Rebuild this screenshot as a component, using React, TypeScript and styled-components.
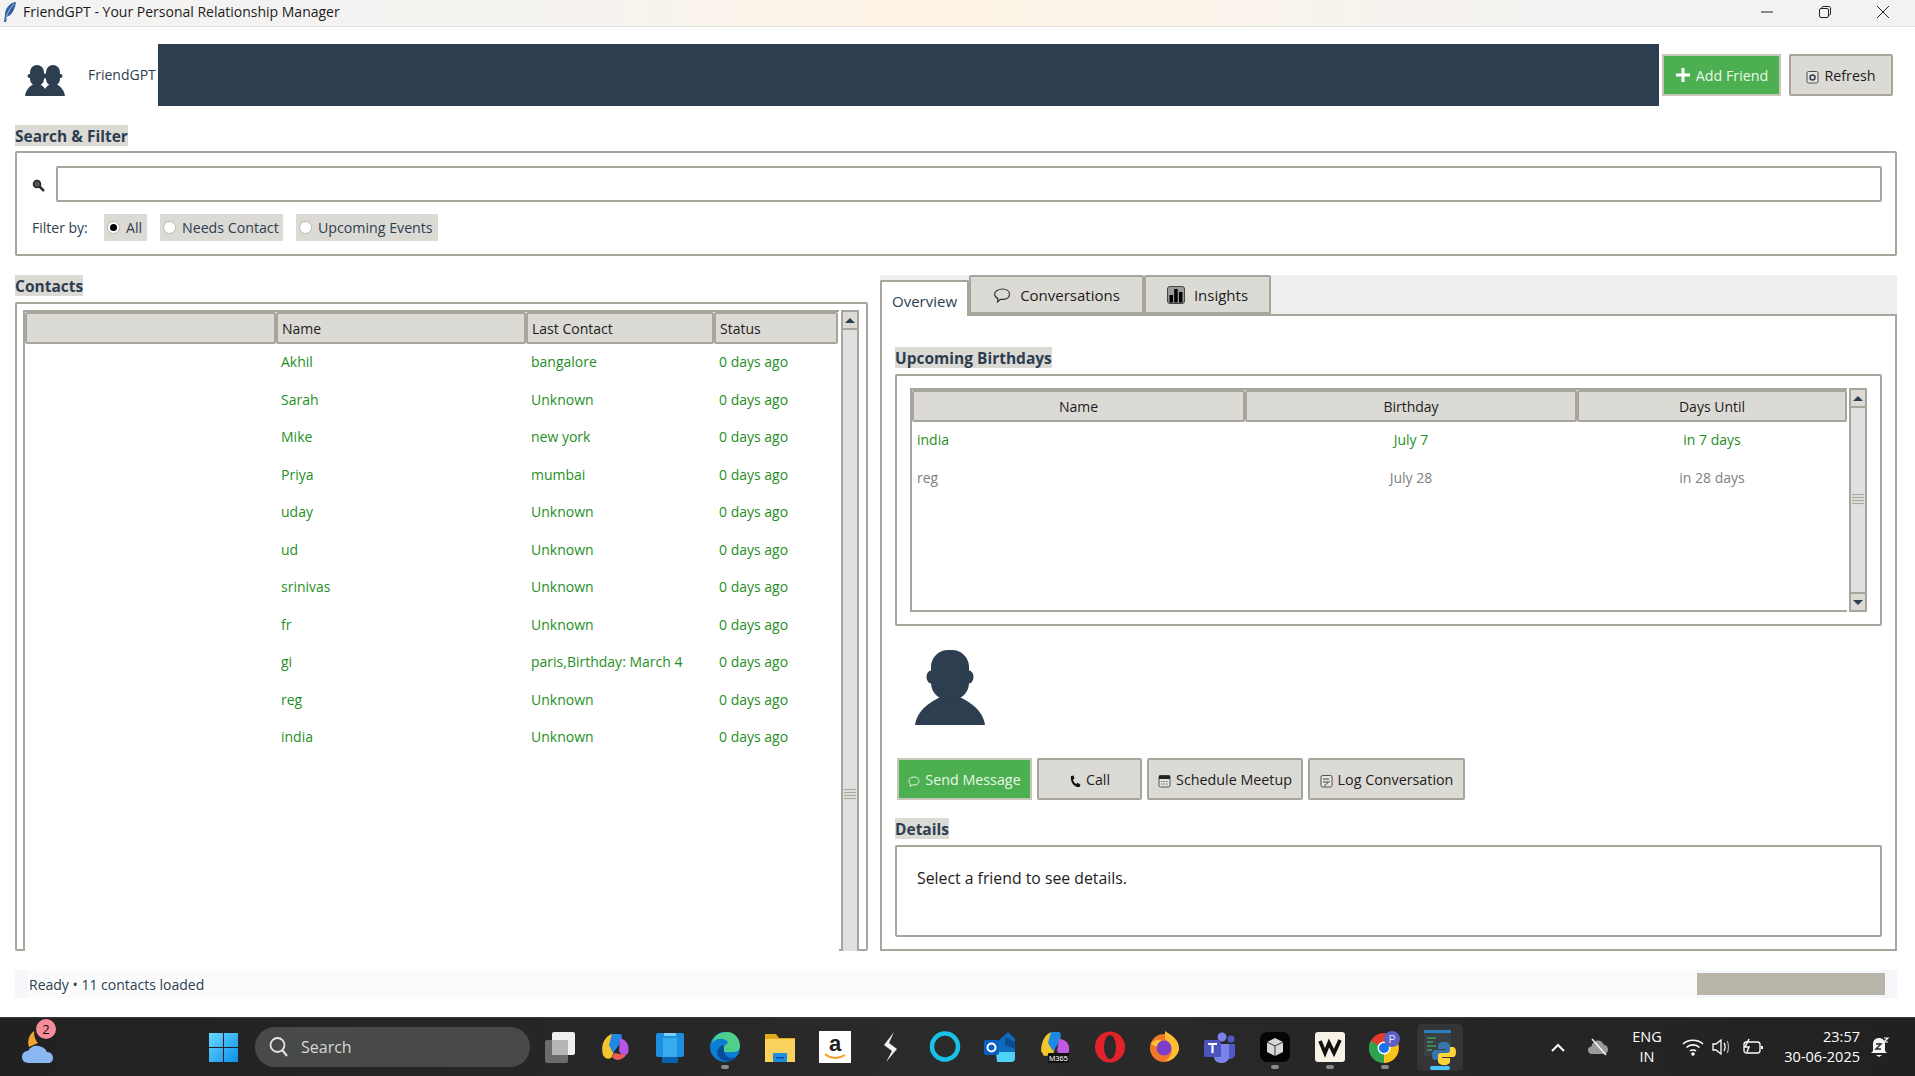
import React from 'react'
import styled, {createGlobalStyle} from 'styled-components'

const NAVY = '#2c3e50'
const CLAM = '#dcdad5'
const EDGE = '#a8a59c'

const GlobalStyle = createGlobalStyle`
  html, body {
    margin: 0;
    padding: 0;
    background: #fff;
  }
  body {
    font-family: "Open Sans", "Noto Sans", "Liberation Sans", sans-serif;
    font-size: 14px;
    color: #1c1c1c;
  }
`

const Page = styled.div`
  width: 1915px;
  height: 1076px;
  display: flex;
  flex-direction: column;
  overflow: hidden;
  background: #fff;
`

const TitleBar = styled.header`
  flex: none;
  display: flex;
  align-items: center;
  padding: 0 3px 3px 3px;
  border-bottom: 1px solid #e2e2e2;
  height: 23px;
  background: linear-gradient(90deg, #f3f3f3 0%, #f5f3f0 28%, #fdf3e5 48%, #f8f3ec 68%, #f2f2f2 84%);
  font-size: 14px;
`

const TitleText = styled.span`
  margin-left: 6px;
  flex: 1;
`

const WindowButton = styled.span`
  width: 58px;
  height: 23px;
  display: flex;
  align-items: center;
  justify-content: center;
`

const AppBody = styled.main`
  flex: 1;
  min-height: 0;
  display: flex;
  flex-direction: column;
  padding: 17px 18px 0 15px;
`

const HeaderRow = styled.div`
  height: 62px;
  display: flex;
  align-items: center;
`

const LogoBox = styled.span`
  width: 73px;
  padding: 12px 0 0 10px;
  box-sizing: border-box;
  display: flex;
`

const AppName = styled.span`
  width: 70px;
  margin-top: -2px;
  color: ${NAVY};
  font-size: 14px;
  white-space: nowrap;
`

const HeaderBar = styled.div`
  flex: none;
  width: 1501px;
  height: 62px;
  background: ${NAVY};
`

const HeaderActions = styled.div`
  display: flex;
  gap: 8px;
  margin-left: 3px;
`

const Button = styled.button<{$primary?: boolean; $w: number; $h?: number}>`
  width: ${p => p.$w}px;
  height: ${p => p.$h ?? 42}px;
  flex: none;
  display: flex;
  align-items: center;
  justify-content: center;
  gap: 5px;
  padding: 0;
  font: inherit;
  font-size: 14.3px;
  color: ${p => (p.$primary ? '#e9f7e9' : '#1c1c1c')};
  background: ${p => (p.$primary ? '#4caf50' : CLAM)};
  border: 2px solid ${p => (p.$primary ? '#c6c7b8' : EDGE)};
  border-radius: ${p => (p.$primary ? 0 : 2)}px;
`

const SectionLabel = styled.div<{$top?: number; $gap?: number}>`
  align-self: flex-start;
  height: 21px;
  line-height: 22px;
  margin-top: ${p => p.$top ?? 0}px;
  margin-bottom: ${p => p.$gap ?? 6}px;
  background: ${CLAM};
  color: ${NAVY};
  font-weight: 700;
  font-size: 15.5px;
  white-space: nowrap;
`

const SearchFrame = styled.section`
  height: 105px;
  box-sizing: border-box;
  display: flex;
  flex-direction: column;
  padding: 13px 13px 0 15px;
  border: 2px solid ${EDGE};
  border-radius: 2px;
`

const SearchRow = styled.div`
  display: flex;
  align-items: center;
  gap: 11px;
`

const SearchInput = styled.div`
  flex: 1;
  height: 36px;
  box-sizing: border-box;
  border: 2px solid ${EDGE};
  border-radius: 2px;
  background: #fff;
`

const FilterRow = styled.div`
  display: flex;
  align-items: center;
  margin-top: 12px;
  color: #44525f;
`

const FilterCaption = styled.span`
  width: 72px;
  color: ${NAVY};
`

const RadioChip = styled.label<{$w: number; $gap: number}>`
  width: ${p => p.$w}px;
  margin-right: ${p => p.$gap}px;
  height: 27px;
  display: flex;
  align-items: center;
  gap: 6px;
  padding-left: 3px;
  box-sizing: border-box;
  background: ${CLAM};
  color: ${NAVY};
  font-size: 14.2px;
  white-space: nowrap;
`

const RadioDot = styled.span<{$on?: boolean}>`
  width: 13px;
  height: 13px;
  flex: none;
  box-sizing: border-box;
  border: 1px solid #bcb9b0;
  border-radius: 50%;
  background: #fff;
  display: flex;
  align-items: center;
  justify-content: center;

  &::after {
    content: '';
    width: 7px;
    height: 7px;
    border-radius: 50%;
    background: ${p => (p.$on ? '#000' : 'transparent')};
  }
`

const Columns = styled.div`
  height: 676px;
  margin-top: 19px;
  display: grid;
  grid-template-columns: 853px 1017px;
  gap: 12px;
`

const ContactsColumn = styled.section`
  min-height: 0;
  display: flex;
  flex-direction: column;
`

const GroupFrame = styled.div<{$h?: number}>`
  ${p => (p.$h ? `height: ${p.$h}px;` : 'flex: 1;')}
  min-height: 0;
  box-sizing: border-box;
  border: 2px solid ${EDGE};
  border-radius: 2px;
  background: #fff;
`

const ContactsFrame = styled(GroupFrame)`
  padding: 6px 7px 0 6px;
  display: flex;

  & > * {
    margin-bottom: -2px;
    position: relative;
  }
`

const TreeBody = styled.div<{$closed?: boolean}>`
  flex: 1;
  min-width: 0;
  background: #fff;
  border: solid ${EDGE};
  border-width: 2px 0 ${p => (p.$closed ? 2 : 0)}px 2px;
  display: flex;
  flex-direction: column;
`

const TreeHead = styled.div<{$cols: string}>`
  height: 32px;
  flex: none;
  display: grid;
  grid-template-columns: ${p => p.$cols};
`

const HeadCell = styled.div<{$center?: boolean}>`
  display: flex;
  align-items: center;
  justify-content: ${p => (p.$center ? 'center' : 'flex-start')};
  padding-left: ${p => (p.$center ? 0 : 4)}px;
  background: ${CLAM};
  border: 2px solid ${EDGE};
  border-radius: 2px;
  font-size: 14px;
  color: #1c1c1c;
`

const TreeRow = styled.div<{$cols: string; $muted?: boolean}>`
  height: 37.5px;
  box-sizing: border-box;
  padding-bottom: 2px;
  display: grid;
  grid-template-columns: ${p => p.$cols};
  align-items: center;
  font-size: 14px;
  color: ${p => (p.$muted ? '#808080' : '#1f8f1f')};
`

const TreeCell = styled.span<{$center?: boolean}>`
  padding-left: ${p => (p.$center ? 0 : 5)}px;
  text-align: ${p => (p.$center ? 'center' : 'left')};
  white-space: nowrap;
`

const Scrollbar = styled.div<{$open?: boolean}>`
  width: 18px;
  flex: none;
  margin-left: 2px;
  display: flex;
  flex-direction: column;
  box-sizing: border-box;
  border: solid ${EDGE};
  border-width: 2px 2px ${p => (p.$open ? 0 : 2)}px 2px;
  background: #e0e0e0;
`

const ScrollArrow = styled.div<{$down?: boolean}>`
  height: 16px;
  flex: none;
  display: flex;
  align-items: center;
  justify-content: center;
  background: ${CLAM};
  border-${p => (p.$down ? 'top' : 'bottom')}: 2px solid ${EDGE};

  &::after {
    content: '';
    border: 5px solid transparent;
    border-top-width: ${p => (p.$down ? 5 : 0)}px;
    border-bottom-width: ${p => (p.$down ? 0 : 5)}px;
    border-top-color: ${p => (p.$down ? NAVY : 'transparent')};
    border-bottom-color: ${p => (p.$down ? 'transparent' : NAVY)};
  }
`

const ScrollTrack = styled.div<{$gripAt?: number}>`
  flex: 1;
  display: flex;
  align-items: ${p => (p.$gripAt ? 'flex-start' : 'center')};
  justify-content: center;
  padding-top: ${p => p.$gripAt ?? 0}px;
`

const Grip = styled.div`
  width: 12px;
  height: 12px;
  background: repeating-linear-gradient(180deg, #a9a69e 0 1px, #dedcd8 1px 3px);
`

const Notebook = styled.section`
  min-height: 0;
  display: flex;
  flex-direction: column;
`

const TabStrip = styled.div`
  height: 39px;
  flex: none;
  display: flex;
  align-items: flex-end;
  background: #eeeeee;
`

const Tab = styled.div<{$active?: boolean; $w: number}>`
  width: ${p => p.$w}px;
  height: ${p => (p.$active ? 36 : 39)}px;
  box-sizing: border-box;
  display: flex;
  align-items: center;
  justify-content: center;
  gap: 9px;
  padding-top: ${p => (p.$active ? 3 : 1)}px;
  margin-bottom: ${p => (p.$active ? -2 : 0)}px;
  position: relative;
  font-size: 15px;
  color: ${p => (p.$active ? NAVY : '#1c1c1c')};
  background: ${p => (p.$active ? '#fff' : CLAM)};
  border: 2px solid ${EDGE};
  border-bottom: ${p => (p.$active ? 'none' : `2px solid ${EDGE}`)};
  border-radius: 2px 2px 0 0;
`

const TabPane = styled.div`
  flex: 1;
  min-height: 0;
  display: flex;
  flex-direction: column;
  padding: 31px 13px 0 13px;
  box-sizing: border-box;
  border: 2px solid ${EDGE};
  background: #fff;
`

const BirthdaysFrame = styled(GroupFrame)`
  padding: 12px 13px 12px 13px;
  display: flex;
  flex: none;
`

const AvatarBox = styled.div`
  height: 75px;
  margin: 24px 0 33px 20px;
  display: flex;
`

const ActionRow = styled.div`
  display: flex;
  gap: 5px;
  margin-left: 2px;
  margin-bottom: 18px;
`

const DetailsBox = styled(GroupFrame)`
  padding: 20px 20px 0;
  font-size: 15.8px;
  flex: none;
  color: #1c1c1c;
`

const StatusBar = styled.footer`
  height: 28px;
  flex: none;
  margin: 19px 0 19px;
  display: flex;
  align-items: center;
  padding: 0 12px 0 12px;
  background: #f5f6f9;
  color: ${NAVY};
  font-size: 14px;
`

const StatusText = styled.span`
  flex: 1;
  height: 100%;
  display: flex;
  align-items: center;
  padding-left: 2px;
  background: #fbfbfb;
`

const Progress = styled.div`
  width: 188px;
  height: 22px;
  background: #b9b5ab;
`

const Taskbar = styled.footer`
  height: 59px;
  flex: none;
  display: flex;
  align-items: center;
  background: linear-gradient(90deg, #212121 0%, #262626 30%, #2b2b2b 50%, #262626 75%, #212121 100%);
  border-top: 1px solid #3a3a3a;
  box-sizing: border-box;
  color: #fff;
`

const WeatherSlot = styled.div`
  width: 209px;
  flex: none;
  padding-left: 22px;
  box-sizing: border-box;
  position: relative;
  display: flex;
`

const WeatherBadge = styled.span`
  position: absolute;
  left: 36px;
  top: -10px;
  width: 20px;
  height: 20px;
  border-radius: 50%;
  background: #f78d9a;
  color: #111;
  font-size: 13px;
  display: flex;
  align-items: center;
  justify-content: center;
`

const StartSlot = styled.div`
  width: 46px;
  flex: none;
  display: flex;
`

const SearchPill = styled.div`
  width: 275px;
  height: 40px;
  margin-right: 2px;
  flex: none;
  box-sizing: border-box;
  padding-left: 14px;
  display: flex;
  align-items: center;
  gap: 12px;
  border-radius: 20px;
  background: #484a49;
  color: #d6d6d6;
  font-size: 16px;
`

const TaskSlot = styled.div<{$active?: boolean}>`
  width: ${p => (p.$active ? 46 : 55)}px;
  margin: ${p => (p.$active ? '0 4.5px' : 0)};
  height: 47px;
  flex: none;
  position: relative;
  display: flex;
  align-items: center;
  justify-content: center;
  border-radius: 5px;
  background: ${p => (p.$active ? '#353535' : 'transparent')};
`

const RunDot = styled.span<{$active?: boolean}>`
  position: absolute;
  left: 50%;
  bottom: ${p => (p.$active ? 1 : 2)}px;
  transform: translateX(-50%);
  width: ${p => (p.$active ? 20 : 8)}px;
  height: 4px;
  border-radius: 2px;
  background: ${p => (p.$active ? '#4cc2ff' : '#8a8a8a')};
`

const Tray = styled.div`
  flex: 1;
  height: 100%;
  display: flex;
  align-items: center;
  padding-left: 71px;
  font-size: 14.5px;
`

const TraySlot = styled.span<{$w: number}>`
  width: ${p => p.$w}px;
  flex: none;
  display: flex;
  align-items: center;
  justify-content: center;
`

const LangBlock = styled.div`
  width: 58px;
  flex: none;
  text-align: center;
  line-height: 20px;
`

const ClockBlock = styled.div`
  width: 88px;
  flex: none;
  text-align: right;
  line-height: 20px;
  white-space: nowrap;
`

const contacts = [
  ['Akhil', 'bangalore'],
  ['Sarah', 'Unknown'],
  ['Mike', 'new york'],
  ['Priya', 'mumbai'],
  ['uday', 'Unknown'],
  ['ud', 'Unknown'],
  ['srinivas', 'Unknown'],
  ['fr', 'Unknown'],
  ['gi', 'paris,Birthday: March 4'],
  ['reg', 'Unknown'],
  ['india', 'Unknown']
]

const CONTACT_COLS = '251px 250px 188px 124px'
const BIRTHDAY_COLS = '333px 332px 270px'

const Bust = ({size = 40}: {size?: number}) => (
  <svg width={size} height={(size * 75) / 70} viewBox="0 0 70 75">
    <g fill={NAVY}>
      <path d="M0 75C2 60 16 51 28 46H42C54 51 68 60 70 75Z" />
      <rect x="16" y="0" width="38" height="50" rx="17" />
      <ellipse cx="16" cy="27" rx="4.5" ry="6.5" />
      <ellipse cx="54" cy="27" rx="4.5" ry="6.5" />
    </g>
  </svg>
)

const GroupLogo = () => (
  <svg width="40" height="32" viewBox="0 0 40 32">
    <g fill={NAVY}>
      <path d="M0 31C1 24 5 21 9 19H14C17 20 19 22 20 24C21 22 23 20 26 19H31C35 21 39 24 40 31Z" />
      <rect x="5" y="0" width="14" height="21" rx="7" />
      <rect x="21" y="0" width="14" height="21" rx="7" />
      <circle cx="4.5" cy="11" r="2" />
      <circle cx="35.5" cy="11" r="2" />
      <circle cx="20" cy="11" r="2.5" />
    </g>
  </svg>
)

const Feather = () => (
  <svg width="14" height="22" viewBox="0 0 14 22">
    <path d="M13 1C6 2 2 8 2 14L1 21L3 21L4 16C9 14 12 8 13 1Z" fill="#2f5f9e" />
    <path d="M11 3C7 7 4 12 3 18" stroke="#a9c5e6" strokeWidth="1" fill="none" />
  </svg>
)

const Magnifier = () => (
  <svg width="13" height="13" viewBox="0 0 13 13" style={{marginTop: 3}}>
    <circle cx="5" cy="5" r="3.5" fill="#4a5a68" stroke="#222" strokeWidth="1.5" />
    <path d="M7.5 7.5L12 12" stroke="#333" strokeWidth="2.5" />
  </svg>
)

const SmallBox = ({kind}: {kind: 'refresh' | 'calendar' | 'log'}) => (
  <svg width="13" height="14" viewBox="0 0 13 14" style={{marginTop: 4}}>
    <rect x="1" y="1.5" width="11" height="11.5" rx="1.5" fill="#e6e4e0" stroke="#4f4f4f" />
    {kind === 'refresh' && <circle cx="6.5" cy="7.5" r="2.5" fill="none" stroke="#2c3e50" strokeWidth="1.5" />}
    {kind === 'calendar' && (
      <>
        <rect x="1" y="1.5" width="11" height="3.5" fill="#222" />
        <path d="M3 7.5H10M3 10H10" stroke="#666" strokeDasharray="1.5 1" />
      </>
    )}
    {kind === 'log' && <path d="M3 5H9M3 8H8M4 12L10 7" stroke="#444" fill="none" />}
  </svg>
)

const Plus = () => (
  <svg width="16" height="16" viewBox="0 0 16 16">
    <path d="M8 1V15M1 8H15" stroke="#fff" strokeWidth="3" />
  </svg>
)

const SpeechSmall = () => (
  <svg width="12" height="11" viewBox="0 0 12 11" style={{marginTop: 4}}>
    <path d="M6 1C9 1 11 2.6 11 5S9 9 6 9H4L2 10.5L2.5 8.2C1.5 7.5 1 6.3 1 5C1 2.6 3 1 6 1Z" fill="none" stroke="#dff3df" />
  </svg>
)

const PhoneIcon = () => (
  <svg width="12" height="13" viewBox="0 0 12 13" style={{marginTop: 4}}>
    <path d="M2 1L4.5 0.5L5.5 3.5L4 4.5C4.4 6.5 5.5 8 7.3 9L8.8 7.8L11.5 9.8L10.5 12C6 12.8 1 8 2 1Z" fill="#111" />
  </svg>
)

const SpeechTab = () => (
  <svg width="18" height="17" viewBox="0 0 18 17">
    <path d="M9.5 2C13.6 2 16.5 4.2 16.5 7.2S13.6 12.4 9.5 12.4H7.4L4.5 15L5 11.6C3 10.7 1.6 9.1 1.6 7.2C1.6 4.2 5.4 2 9.5 2Z" fill="none" stroke="#333" strokeWidth="1.2" />
  </svg>
)

const ChartTab = () => (
  <svg width="18" height="18" viewBox="0 0 18 18">
    <rect x="0.5" y="0.5" width="17" height="17" rx="2.5" fill="#9a9a9a" stroke="#444" />
    <rect x="2.5" y="9" width="3.5" height="7.5" fill="#000" />
    <rect x="7.2" y="3" width="3.5" height="13.5" fill="#000" />
    <rect x="12" y="6" width="3.5" height="10.5" fill="#000" />
  </svg>
)

const tile = (children: React.ReactNode) => (
  <svg width="32" height="32" viewBox="0 0 32 32">
    {children}
  </svg>
)

const WindowsLogo = () => (
  <svg width="29" height="29" viewBox="0 0 29 29">
    <defs>
      <linearGradient id="winLogo" x1="0" y1="0" x2="1" y2="1">
        <stop offset="0" stopColor="#6ad7ff" />
        <stop offset="1" stopColor="#0c8fe8" />
      </linearGradient>
    </defs>
    <path d="M0 0H14V14H0ZM15 0H29V14H15ZM0 15H14V29H0ZM15 15H29V29H15Z" fill="url(#winLogo)" />
  </svg>
)

const SearchGlyph = () => (
  <svg width="20" height="22" viewBox="0 0 20 22">
    <circle cx="8.5" cy="9" r="7" fill="none" stroke="#e4e4e4" strokeWidth="1.8" />
    <path d="M13.5 14.5L18 20" stroke="#e4e4e4" strokeWidth="2" />
  </svg>
)

const WeatherIcon = () => (
  <svg width="32" height="36" viewBox="0 0 32 36">
    <path d="M12 2C7 6 5 12 7 18L16 14C13 11 12 7 12 2Z" fill="#f1a42e" />
    <path d="M7 34C2 34 0 31 0 28C0 24 3 22 6 22C8 18 12 16 17 17C21 18 24 20 25 23C29 23 31 26 31 29C31 32 29 34 26 34Z" fill="#8ab6f2" />
  </svg>
)

const taskIcons: {key: string; icon: React.ReactNode; run?: boolean}[] = [
  {
    key: 'taskview',
    icon: tile(
      <>
        <rect x="1" y="9" width="23" height="23" rx="2" fill="#6b6b6b" />
        <rect x="8" y="1" width="23" height="23" rx="2" fill="#efefef" />
        <rect x="8" y="9" width="16" height="15" fill="#b5b5b5" />
      </>
    )
  },
  {
    key: 'copilot',
    icon: tile(
      <>
        <path d="M4 24C1 14 6 5 13 3H20L13 26C10 29 6 28 4 24Z" fill="#f4c430" />
        <path d="M13 3H21C25 4 22 8 20 14L14 22L10 14Z" fill="#1e88e5" />
        <path d="M21 7C28 9 31 15 29 22C26 26 22 24 20 20Z" fill="#b556e6" />
        <path d="M13 26C17 31 24 29 27 24L15 22Z" fill="#ef5b5b" />
      </>
    )
  },
  {
    key: 'store',
    icon: tile(
      <>
        <rect x="2" y="2" width="28" height="24" rx="2" fill="#1c8fe0" />
        <rect x="10" y="2" width="12" height="3" fill="#7bd0ff" />
        <path d="M8 26H24V32H8Z" fill="#0a5fae" />
        <path d="M9 7H23V26H9Z" fill="#36abf0" />
      </>
    )
  },
  {
    key: 'edge',
    run: true,
    icon: tile(
      <>
        <circle cx="16" cy="16" r="15" fill="#0c7fd4" />
        <path d="M3 12C5 4 12 1 18 1C26 1 31 8 31 15C31 20 27 21 23 21H14C13 15 19 13 19 11C15 6 7 7 3 12Z" fill="#4fd08a" />
        <path d="M15 19C15 25 21 29 27 26C23 31 13 32 9 25C7 20 10 15 14 14C15 16 15 17 15 19Z" fill="#0a4a9a" />
      </>
    )
  },
  {
    key: 'folder',
    icon: tile(
      <>
        <path d="M1 3H12L15 7H31V31H1Z" fill="#e0a91c" />
        <rect x="1" y="8" width="30" height="23" fill="#fbd25c" />
        <rect x="9" y="22" width="14" height="9" rx="1" fill="#1c8fe0" />
        <rect x="12" y="26" width="8" height="1.5" fill="#0a4a9a" />
      </>
    )
  },
  {
    key: 'amazon',
    icon: tile(
      <>
        <rect x="0" y="0" width="32" height="32" fill="#fff" />
        <text x="16" y="20" textAnchor="middle" fontSize="22" fontWeight="700" fill="#222" fontFamily="Liberation Sans, sans-serif">a</text>
        <path d="M6 23C12 28 20 28 26 24" stroke="#f59a23" strokeWidth="2" fill="none" />
      </>
    )
  },
  {
    key: 'kite',
    icon: tile(<path d="M20 1L10 14L18 20L12 31L23 18L15 12Z" fill="#f2f2f2" />)
  },
  {
    key: 'alexa',
    icon: tile(
      <>
        <circle cx="16" cy="15.5" r="13" fill="none" stroke="#19c1e8" strokeWidth="4.5" />
        <path d="M9 25L13 31L16 27Z" fill="#19c1e8" />
      </>
    )
  },
  {
    key: 'outlook',
    icon: tile(
      <>
        <path d="M12 12L24 1L31 8V26C31 29 29 31 27 31H13Z" fill="#0f6cbd" />
        <path d="M12 21H31V27C31 30 29 31 27 31H13Z" fill="#4fd2f5" />
        <path d="M21 6L31 11V18L21 14Z" fill="#0a4a8e" />
        <rect x="0" y="9" width="15" height="15" rx="2" fill="#0a5fc2" />
        <circle cx="7.5" cy="16.5" r="4" fill="none" stroke="#fff" strokeWidth="2" />
      </>
    )
  },
  {
    key: 'm365',
    icon: tile(
      <>
        <path d="M2 20C2 10 7 2 13 1H20L14 24L5 25Z" fill="#f0c52e" />
        <path d="M12 1H20C23 2 22 8 19 13L14 20L9 12Z" fill="#1e88e5" />
        <path d="M20 8C27 8 31 13 30 21C27 25 20 24 18 20Z" fill="#c05ae0" />
        <path d="M14 23L28 22L24 27H14Z" fill="#ef6c7f" />
        <rect x="9" y="22" width="21" height="10" rx="1" fill="#111" />
        <text x="19.5" y="30" textAnchor="middle" fontSize="7.5" fill="#fff" fontFamily="Liberation Sans, sans-serif">M365</text>
      </>
    )
  },
  {
    key: 'opera',
    icon: tile(
      <>
        <ellipse cx="16" cy="16" rx="15" ry="15.5" fill="#e3222a" />
        <ellipse cx="16" cy="16" rx="6" ry="12" fill="#2a2a2a" />
      </>
    )
  },
  {
    key: 'firefox',
    icon: tile(
      <>
        <circle cx="15" cy="17" r="14" fill="#f2772b" />
        <path d="M16 0C24 5 31 10 30 19C28 26 22 30 16 30C24 26 26 15 16 8Z" fill="#fbbf31" />
        <circle cx="15" cy="17" r="7.5" fill="#7d3cc9" />
        <path d="M2 13C4 9 9 8 13 9C10 11 8 13 8 16Z" fill="#f9c13a" />
      </>
    )
  },
  {
    key: 'teams',
    icon: tile(
      <>
        <circle cx="18" cy="6" r="4.5" fill="#7b83eb" />
        <circle cx="27" cy="8" r="3.5" fill="#5059c9" />
        <path d="M22 13H31V23C31 27 28 28 25 28L22 25Z" fill="#5059c9" />
        <path d="M10 13H25V26C25 30 21 32 17 32C13 32 10 29 10 26Z" fill="#7b83eb" />
        <rect x="0" y="9" width="17" height="17" rx="1.5" fill="#4b53bc" />
        <path d="M4 13H13M8.5 13V22" stroke="#fff" strokeWidth="2.2" />
      </>
    )
  },
  {
    key: 'box',
    run: true,
    icon: tile(
      <>
        <rect x="1" y="1" width="30" height="30" rx="7" fill="#050505" />
        <path d="M16 7L24 11V21L16 25L8 21V11Z" fill="#d8d8d8" />
        <path d="M16 15V25M8 11L16 15L24 11" stroke="#333" fill="none" />
      </>
    )
  },
  {
    key: 'wave',
    run: true,
    icon: tile(
      <>
        <rect x="1" y="1" width="30" height="30" rx="3" fill="#f8f2e6" />
        <path d="M6 10L11 22L15 12L20 22L26 9" stroke="#111" strokeWidth="3.6" fill="none" />
      </>
    )
  },
  {
    key: 'chrome',
    run: true,
    icon: tile(
      <>
        <circle cx="15" cy="17" r="15" fill="#e33b2e" />
        <path d="M15 17L28 10A15 15 0 0 1 15 32Z" fill="#f5c518" />
        <path d="M15 17L15 32A15 15 0 0 1 1.5 10Z" fill="#2ea44f" />
        <circle cx="15" cy="17" r="6.5" fill="#fff" />
        <circle cx="15" cy="17" r="5" fill="#1a73e8" />
        <circle cx="23" cy="8" r="8" fill="#5b5fc7" />
        <text x="23" y="12" textAnchor="middle" fontSize="10" fill="#e6e6ff" fontFamily="Liberation Sans, sans-serif">P</text>
      </>
    )
  }
]

const PythonIcon = () => (
  <svg width="32" height="36" viewBox="0 0 32 36">
    <rect x="0" y="1" width="27" height="26" fill="#3a4046" />
    <rect x="0" y="1" width="27" height="3" fill="#2a7fc2" />
    <path d="M3 9H12M3 13H9M3 17H12M3 21H8" stroke="#3f9e5a" strokeWidth="1.4" />
    <path d="M20 13C15 13 14 15 14 17V20H22V21H11C9 21 8 23 8 26C8 29 9 31 12 31H14V28C14 26 15 25 17 25H23C25 25 26 24 26 22V17C26 15 24 13 20 13Z" fill="#3776ab" />
    <path d="M20 36C25 36 26 34 26 32V29H18V28H29C31 28 32 26 32 23C32 20 31 18 28 18H26V21C26 23 25 24 23 24H17C15 24 14 25 14 27V32C14 34 16 36 20 36Z" fill="#ffd43b" />
  </svg>
)

const ChevronUp = () => (
  <svg width="14" height="9" viewBox="0 0 14 9">
    <path d="M1 8L7 2L13 8" stroke="#fff" strokeWidth="2" fill="none" />
  </svg>
)

const CloudOff = () => (
  <svg width="22" height="18" viewBox="0 0 22 18">
    <path d="M5 16C2 16 1 14 1 12C1 10 2.5 8.5 4.5 8.5C5 5 8 2.5 11 2.5C14 2.5 16 4.5 17 7C19.5 7 21 9 21 11.5C21 14 19.5 16 17 16Z" fill="#9a9a9a" />
    <path d="M5 1L19 17" stroke="#fff" strokeWidth="1.4" />
  </svg>
)

const WifiIcon = () => (
  <svg width="22" height="18" viewBox="0 0 22 18" fill="none" stroke="#fff" strokeWidth="1.6">
    <path d="M1 6C6 1 16 1 21 6" />
    <path d="M4.5 9.5C8 6 14 6 17.5 9.5" />
    <path d="M8 13C9.5 11.6 12.5 11.6 14 13" />
    <circle cx="11" cy="16" r="1" fill="#fff" />
  </svg>
)

const VolumeIcon = () => (
  <svg width="20" height="18" viewBox="0 0 20 18" fill="none" stroke="#fff" strokeWidth="1.3">
    <path d="M1 6H4L9 2V16L4 12H1Z" />
    <path d="M12 5C13.5 7 13.5 11 12 13" />
    <path d="M15 3C17 6 17 12 15 15" opacity="0.6" />
  </svg>
)

const BatteryIcon = () => (
  <svg width="22" height="18" viewBox="0 0 22 18" fill="none" stroke="#fff" strokeWidth="1.3">
    <rect x="2" y="4" width="16" height="11" rx="2.5" />
    <path d="M20 8V11" strokeWidth="2" />
    <path d="M7 1L3 9H7L5 14" fill="none" strokeWidth="1.5" />
  </svg>
)

const BellIcon = () => (
  <svg width="20" height="22" viewBox="0 0 20 22">
    <path d="M3 15V8C3 4 6 2 9 2C12 2 15 4 15 8V15L17 17H1Z" fill="#f3f3f3" />
    <path d="M6 19H12L9 21Z" fill="#f3f3f3" />
    <path d="M6 8H11L6 13H11" stroke="#222" strokeWidth="1.4" fill="none" />
    <path d="M14 2H18L14 6H18" stroke="#fff" strokeWidth="1.2" fill="none" />
  </svg>
)

const App = () => (
  <Page>
    <GlobalStyle />
    <TitleBar>
      <Feather />
      <TitleText>FriendGPT - Your Personal Relationship Manager</TitleText>
      <WindowButton>
        <svg width="12" height="12" viewBox="0 0 12 12"><path d="M0 6H12" stroke="#222" /></svg>
      </WindowButton>
      <WindowButton>
        <svg width="12" height="12" viewBox="0 0 12 12" fill="none" stroke="#222"><rect x="0.5" y="2.5" width="9" height="9" rx="1.5" /><path d="M3 2.5V1.5C3 1 3.5 .5 4 .5H10C11 .5 11.5 1 11.5 2V8C11.5 8.5 11 9 10 9" /></svg>
      </WindowButton>
      <WindowButton>
        <svg width="12" height="12" viewBox="0 0 12 12"><path d="M0 0L12 12M12 0L0 12" stroke="#222" /></svg>
      </WindowButton>
    </TitleBar>

    <AppBody>
      <HeaderRow>
        <LogoBox><GroupLogo /></LogoBox>
        <AppName>FriendGPT</AppName>
        <HeaderBar />
        <HeaderActions>
          <Button $primary $w={119}><Plus />Add Friend</Button>
          <Button $w={104}><SmallBox kind="refresh" />Refresh</Button>
        </HeaderActions>
      </HeaderRow>

      <SectionLabel $top={19} $gap={5}>Search &amp; Filter</SectionLabel>
      <SearchFrame>
        <SearchRow>
          <Magnifier />
          <SearchInput />
        </SearchRow>
        <FilterRow>
          <FilterCaption>Filter by:</FilterCaption>
          <RadioChip $w={43} $gap={13}><RadioDot $on />All</RadioChip>
          <RadioChip $w={123} $gap={13}><RadioDot />Needs Contact</RadioChip>
          <RadioChip $w={142} $gap={0}><RadioDot />Upcoming Events</RadioChip>
        </FilterRow>
      </SearchFrame>

      <Columns>
        <ContactsColumn>
          <SectionLabel>Contacts</SectionLabel>
          <ContactsFrame>
            <TreeBody>
              <TreeHead $cols={CONTACT_COLS}>
                <HeadCell />
                <HeadCell>Name</HeadCell>
                <HeadCell>Last Contact</HeadCell>
                <HeadCell>Status</HeadCell>
              </TreeHead>
              {contacts.map(([name, place]) => (
                <TreeRow key={name} $cols={CONTACT_COLS}>
                  <TreeCell />
                  <TreeCell>{name}</TreeCell>
                  <TreeCell>{place}</TreeCell>
                  <TreeCell>0 days ago</TreeCell>
                </TreeRow>
              ))}
            </TreeBody>
            <Scrollbar $open>
              <ScrollArrow />
              <ScrollTrack $gripAt={459}><Grip /></ScrollTrack>
            </Scrollbar>
          </ContactsFrame>
        </ContactsColumn>

        <Notebook>
          <TabStrip>
            <Tab $active $w={89}>Overview</Tab>
            <Tab $w={175}><SpeechTab />Conversations</Tab>
            <Tab $w={127}><ChartTab />Insights</Tab>
          </TabStrip>
          <TabPane>
            <SectionLabel>Upcoming Birthdays</SectionLabel>
            <BirthdaysFrame $h={252}>
              <TreeBody $closed>
                <TreeHead $cols={BIRTHDAY_COLS}>
                  <HeadCell $center>Name</HeadCell>
                  <HeadCell $center>Birthday</HeadCell>
                  <HeadCell $center>Days Until</HeadCell>
                </TreeHead>
                <TreeRow $cols={BIRTHDAY_COLS}>
                  <TreeCell>india</TreeCell>
                  <TreeCell $center>July 7</TreeCell>
                  <TreeCell $center>in 7 days</TreeCell>
                </TreeRow>
                <TreeRow $cols={BIRTHDAY_COLS} $muted>
                  <TreeCell>reg</TreeCell>
                  <TreeCell $center>July 28</TreeCell>
                  <TreeCell $center>in 28 days</TreeCell>
                </TreeRow>
              </TreeBody>
              <Scrollbar>
                <ScrollArrow />
                <ScrollTrack><Grip /></ScrollTrack>
                <ScrollArrow $down />
              </Scrollbar>
            </BirthdaysFrame>
            <AvatarBox><Bust size={70} /></AvatarBox>
            <ActionRow>
              <Button $primary $w={135}><SpeechSmall />Send Message</Button>
              <Button $w={105}><PhoneIcon />Call</Button>
              <Button $w={156}><SmallBox kind="calendar" />Schedule Meetup</Button>
              <Button $w={157}><SmallBox kind="log" />Log Conversation</Button>
            </ActionRow>
            <SectionLabel>Details</SectionLabel>
            <DetailsBox $h={92}>Select a friend to see details.</DetailsBox>
          </TabPane>
        </Notebook>
      </Columns>

      <StatusBar>
        <StatusText>Ready • 11 contacts loaded</StatusText>
        <Progress />
      </StatusBar>
    </AppBody>

    <Taskbar>
      <WeatherSlot>
        <WeatherIcon />
        <WeatherBadge>2</WeatherBadge>
      </WeatherSlot>
      <StartSlot><WindowsLogo /></StartSlot>
      <SearchPill><SearchGlyph />Search</SearchPill>
      {taskIcons.map(item => (
        <TaskSlot key={item.key}>
          {item.icon}
          {item.run && <RunDot />}
        </TaskSlot>
      ))}
      <TaskSlot $active>
        <PythonIcon />
        <RunDot $active />
      </TaskSlot>
      <Tray>
        <TraySlot $w={40}><ChevronUp /></TraySlot>
        <TraySlot $w={40}><CloudOff /></TraySlot>
        <LangBlock>ENG<br />IN</LangBlock>
        <TraySlot $w={34}><WifiIcon /></TraySlot>
        <TraySlot $w={24}><VolumeIcon /></TraySlot>
        <TraySlot $w={38}><BatteryIcon /></TraySlot>
        <ClockBlock>23:57<br />30-06-2025</ClockBlock>
        <TraySlot $w={40}><BellIcon /></TraySlot>
      </Tray>
    </Taskbar>
  </Page>
)

export default App
